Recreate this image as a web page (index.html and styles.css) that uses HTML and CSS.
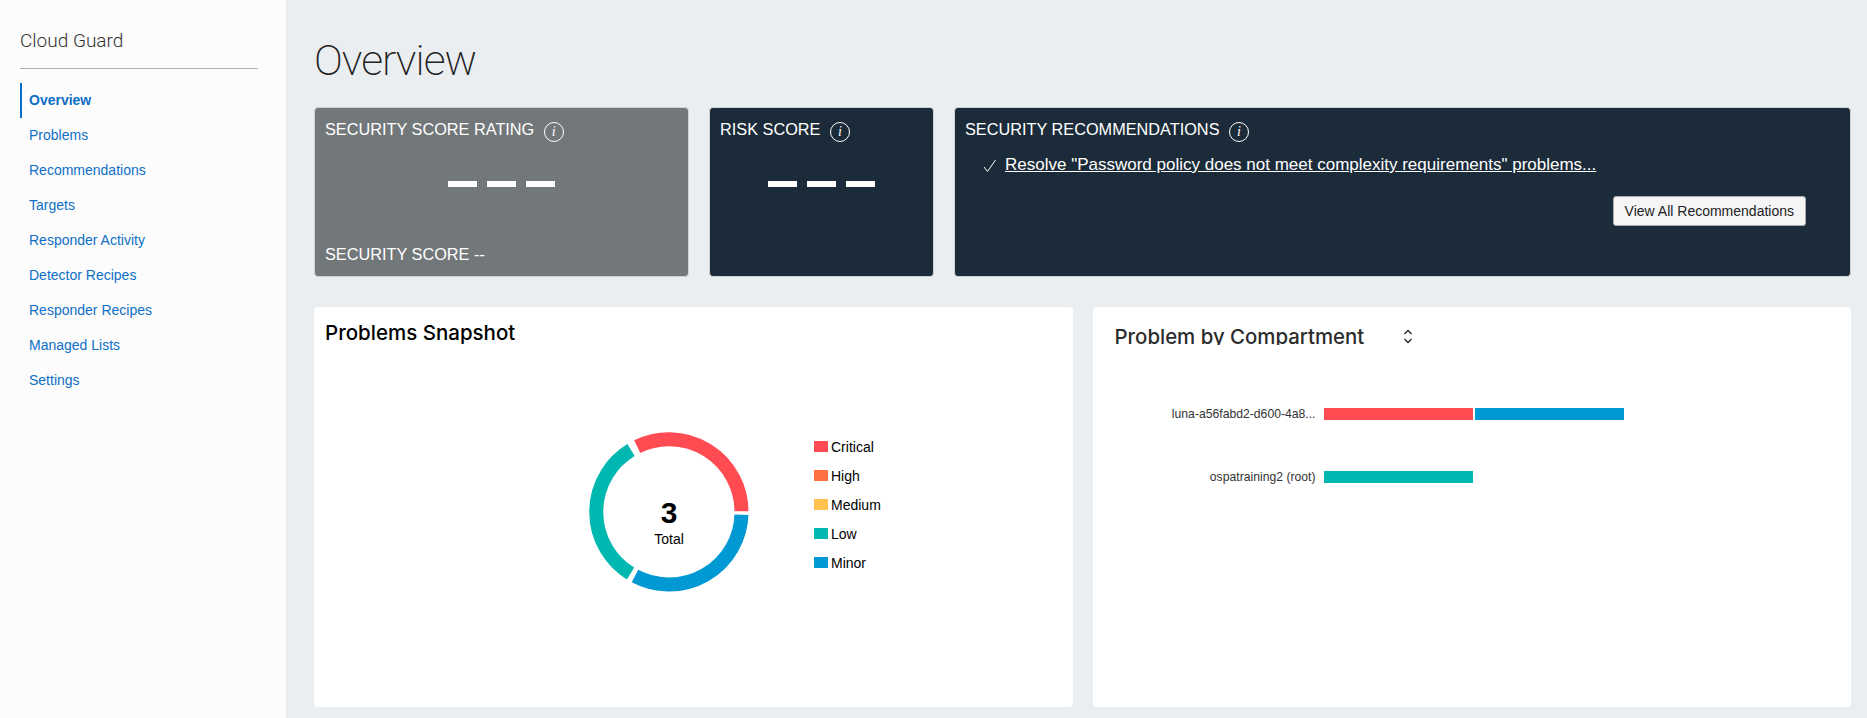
FILE: index.html
```html
<!DOCTYPE html>
<html lang="en">

<head>
    <meta charset="utf-8">
    <title>Cloud Guard</title>
    <link rel="stylesheet" href="styles.css">
</head>

<body>
    <aside class="sidebar">
        <h2 class="side-title">Cloud Guard</h2>
        <nav class="side-nav">
            <a href="#" class="valgt">Overview</a>
            <a href="#">Problems</a>
            <a href="#">Recommendations</a>
            <a href="#">Targets</a>
            <a href="#">Responder Activity</a>
            <a href="#">Detector Recipes</a>
            <a href="#">Responder Recipes</a>
            <a href="#">Managed Lists</a>
            <a href="#">Settings</a>
        </nav>
    </aside>

    <main>
        <h1 class="page-title">Overview</h1>

        <section class="scores">
            <article class="card card-rating">
                <h3 class="card-title">SECURITY SCORE RATING <span class="info">i</span></h3>
                <div class="dashes"><span></span><span></span><span></span></div>
                <p class="card-foot">SECURITY SCORE --</p>
            </article>
            <article class="card card-risk">
                <h3 class="card-title">RISK SCORE <span class="info">i</span></h3>
                <div class="dashes"><span></span><span></span><span></span></div>
            </article>
            <article class="card card-recs">
                <h3 class="card-title">SECURITY RECOMMENDATIONS <span class="info">i</span></h3>
                <p class="rec">
                    <svg class="check" width="14" height="14" viewBox="0 0 14 14"><path d="M1 8l3.500 4.500L12.500 1" fill="none" stroke="#fff" stroke-width="1"/></svg>
                    <a href="#">Resolve "Password policy does not meet complexity requirements" problems...</a>
                </p>
                <div class="rec-actions"><button>View All Recommendations</button></div>
            </article>
        </section>

        <section class="panels">
            <article class="panel">
                <h2 class="panel-title">Problems Snapshot</h2>
                <div class="snapshot">
                    <div class="donut">
                        <svg width="160" height="160" viewBox="0 0 160 160">
                            <path d="M48.200 14.600A72.500 72.500 0 0 1 152.500 79.300" fill="none" stroke="#ff4b51" stroke-width="14"/>
                            <path d="M152.500 82.700A72.500 72.500 0 0 1 46 144" fill="none" stroke="#0099d3" stroke-width="14"/>
                            <path d="M41.500 141.500A72.500 72.500 0 0 1 42 18" fill="none" stroke="#00b8b0" stroke-width="14"/>
                        </svg>
                        <div class="donut-text">
                            <strong>3</strong>
                            <span>Total</span>
                        </div>
                    </div>
                    <ul class="legend">
                        <li><i class="crit"></i>Critical</li>
                        <li><i class="high"></i>High</li>
                        <li><i class="med"></i>Medium</li>
                        <li><i class="low"></i>Low</li>
                        <li><i class="minor"></i>Minor</li>
                    </ul>
                </div>
            </article>

            <article class="panel">
                <div class="compartment-head">
                    <h2 class="compartment-title">Problem by Compartment</h2>
                    <svg width="10" height="15" viewBox="0 0 10 15"><path d="M1.500 5L5 1.500 8.500 5M1.500 10L5 13.500 8.500 10" fill="none" stroke="#222" stroke-width="1.300"/></svg>
                </div>
                <div class="bars">
                    <span class="bar-label">luna-a56fabd2-d600-4a8...</span>
                    <div class="bar"><span class="crit"></span><span class="minor"></span></div>
                    <span class="bar-label">ospatraining2 (root)</span>
                    <div class="bar"><span class="low"></span></div>
                </div>
            </article>
        </section>
    </main>
</body></html>
```

FILE: styles.css
```css
* {
    box-sizing: border-box;
}

html, body {
    height: 100%;
}

body {
    margin: 0;
    display: flex;
    overflow: hidden;
    background-color: #eaeef1;
    color: #000;
    font-family: "Liberation Sans", Arial, sans-serif;
}

/* sidebar */
.sidebar {
    width: 286px;
    flex: none;
    padding: 0 28px 0 20px;
    background-color: #fcfcfc;
}

.side-title {
    margin: 0;
    height: 69px;
    padding-top: 30px;
    border-bottom: 1px solid #a9b0b6;
    font-family: Roboto, sans-serif;
    font-size: 19px;
    font-weight: 300;
    line-height: 22px;
    color: #333;
}

.side-nav {
    display: flex;
    flex-direction: column;
    margin-top: 14px;
}

.side-nav a {
    height: 35px;
    padding-left: 7px;
    border-left: 2px solid transparent;
    font-size: 14px;
    line-height: 35px;
    color: #0f6fc6;
    text-decoration: none;
}

.side-nav a.valgt {
    border-left-color: #0a6bc4;
    font-weight: bold;
}

/* main */
main {
    flex: 1;
    min-width: 0;
    padding: 0 16px 11px 28px;
    display: flex;
    flex-direction: column;
}

.page-title {
    margin: 0;
    height: 107px;
    padding-top: 34px;
    font-family: Roboto, sans-serif;
    font-size: 43px;
    font-weight: 200;
    letter-spacing: -1px;
    line-height: 52px;
    color: #222;
}

.scores {
    display: flex;
    gap: 20px;
    height: 170px;
    flex: none;
}

.card {
    padding: 10px 10px 0;
    border: 1px solid #cfd3d6;
    border-radius: 4px;
    color: #fff;
}

.card-rating {
    width: 375px;
    background-color: #72777a;
}

.card-risk {
    width: 225px;
    background-color: #1c2b39;
}

.card-recs {
    flex: 1;
    background-color: #1c2b39;
}

.card-title {
    margin: 0;
    font-size: 16.300px;
    font-weight: normal;
    line-height: 22px;
}

.info {
    display: inline-block;
    width: 20px;
    height: 20px;
    margin-left: 5px;
    border: 1px solid #fff;
    border-radius: 50%;
    font-family: "Liberation Serif", serif;
    font-size: 14px;
    font-style: italic;
    line-height: 18px;
    text-align: center;
    vertical-align: -1px;
}

.dashes {
    display: flex;
    justify-content: center;
    gap: 10px;
    margin-top: 39px;
}

.dashes span {
    width: 29px;
    height: 6px;
    background-color: #fff;
}

.card-foot {
    margin: 56px 0 0;
    font-size: 16.300px;
    line-height: 22px;
}

.rec {
    display: flex;
    align-items: center;
    gap: 8px;
    margin: 12px 0 0 18px;
    font-size: 17px;
    line-height: 22px;
}

.rec a {
    color: #fff;
}

.check {
    flex: none;
    margin-top: 2px;
}

.rec-actions {
    display: flex;
    justify-content: flex-end;
    margin: 20px 34px 0 0;
}

button {
    height: 30px;
    padding: 0 11px;
    border: 1px solid #a6abb0;
    border-radius: 3px;
    background-color: #f5f5f5;
    color: #222;
    font-family: inherit;
    font-size: 14px;
}

/* lower panels */
.panels {
    flex: 1;
    display: grid;
    grid-template-columns: 1fr 1fr;
    gap: 20px;
    margin-top: 30px;
    min-height: 0;
}

.panel {
    border-radius: 4px;
    background-color: #fff;
}

.panel-title {
    margin: 0;
    padding: 13px 11px 0;
    font-family: Inter, sans-serif;
    font-size: 20.500px;
    font-weight: 500;
    line-height: 26px;
}

.snapshot {
    display: flex;
    align-items: flex-start;
    gap: 65px;
    padding: 86px 0 0 275px;
}

.donut {
    position: relative;
    width: 160px;
    height: 160px;
}

.donut svg {
    display: block;
}

.donut-text {
    position: absolute;
    inset: 0;
    padding-top: 20px;
    display: flex;
    flex-direction: column;
    align-items: center;
    justify-content: center;
}

.donut-text strong {
    font-size: 30px;
    line-height: 34px;
}

.donut-text span {
    font-size: 14px;
    line-height: 18px;
}

.legend {
    list-style: none;
    margin: 0;
    padding: 0;
}

.legend li {
    display: flex;
    align-items: center;
    gap: 3px;
    height: 29px;
    font-size: 14px;
}

.legend i {
    width: 14px;
    height: 11px;
}

.crit { background-color: #ff4b51; }
.high { background-color: #ff7043; }
.med { background-color: #ffc14f; }
.low { background-color: #00b8b0; }
.minor { background-color: #0099d3; }

.compartment-head {
    display: flex;
    align-items: flex-start;
    gap: 39px;
    padding: 18px 0 0 22px;
}

/* the descenders are cut off in the real page too */
.compartment-title {
    margin: 0;
    height: 20px;
    overflow: hidden;
    font-family: Inter, sans-serif;
    font-size: 20.400px;
    font-weight: 500;
    line-height: 24px;
    color: #2b2b2b;
}

.compartment-head svg {
    margin-top: 4px;
}

.bars {
    display: grid;
    grid-template-columns: 223px 1fr;
    column-gap: 8px;
    row-gap: 51px;
    margin-top: 63px;
    align-items: center;
}

.bar-label {
    font-size: 12.200px;
    line-height: 12px;
    text-align: right;
    color: #333;
}

.bar {
    display: flex;
    gap: 2px;
    height: 12px;
}

.bar span {
    width: 149px;
}
```
